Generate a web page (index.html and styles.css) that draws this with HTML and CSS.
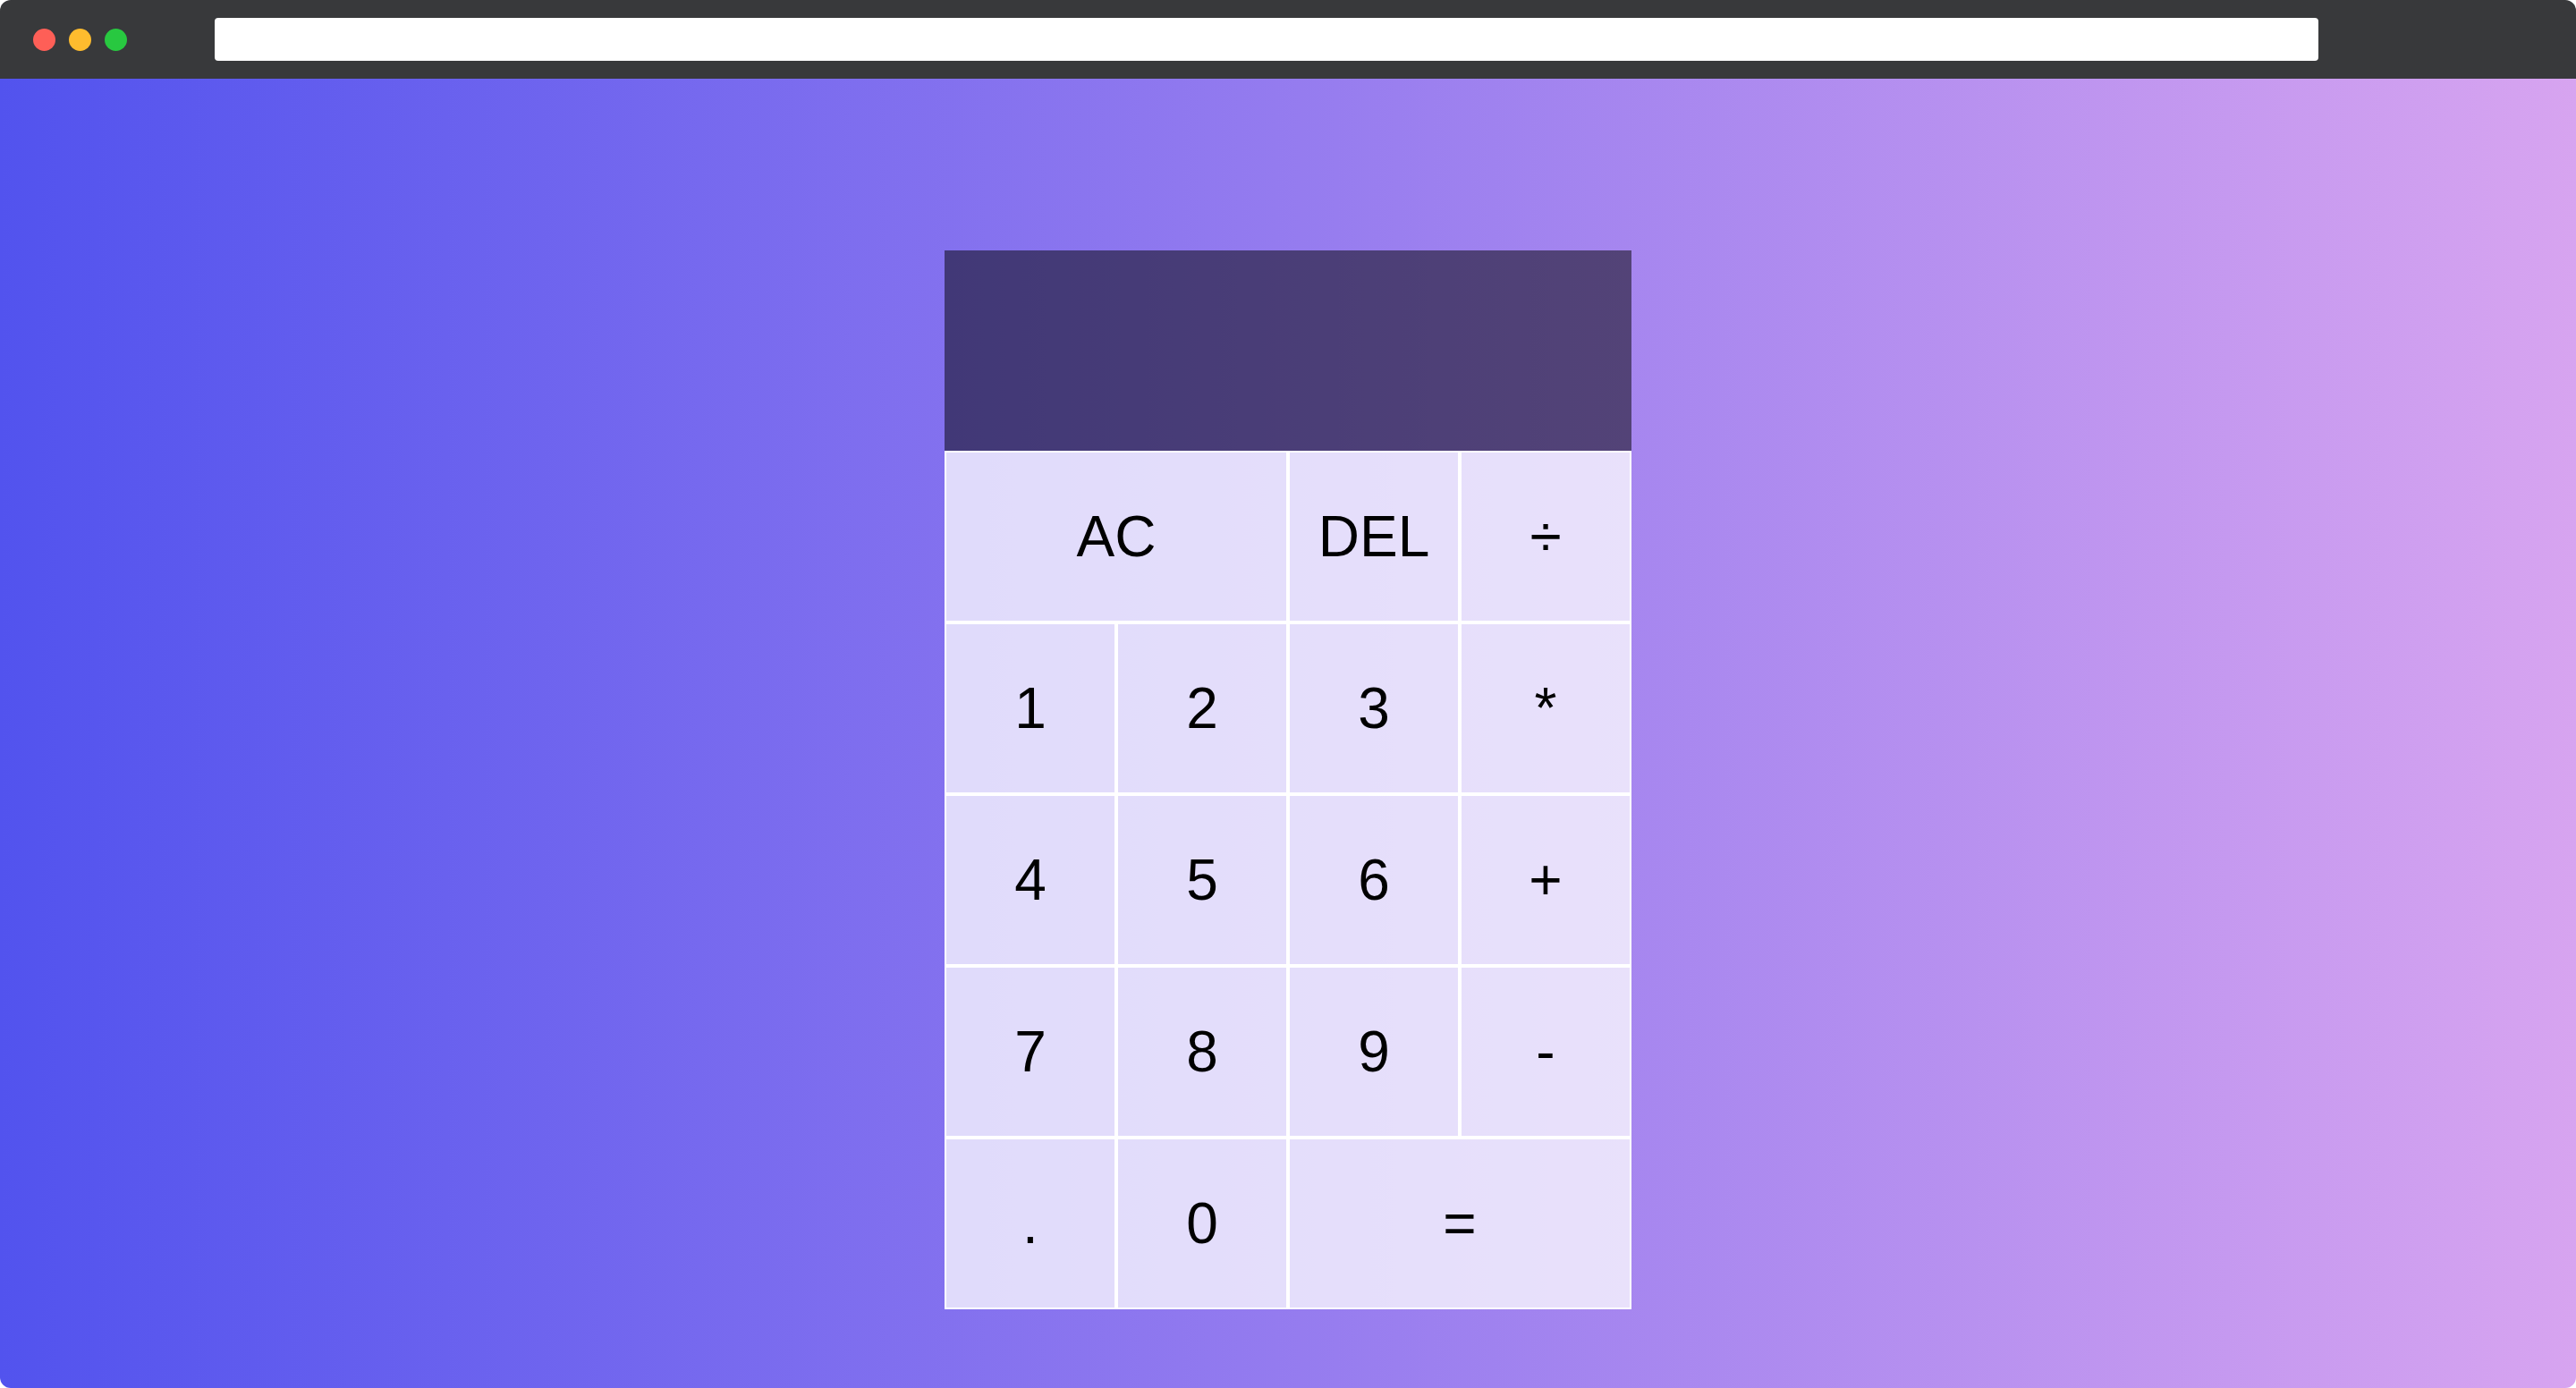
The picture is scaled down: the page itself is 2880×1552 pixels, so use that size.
FILE: index.html
```html
<!DOCTYPE html>
<html>
<head>
<meta charset="utf-8">
<title>Calculator</title>
<link rel="stylesheet" href="styles.css">
</head>
<body>
<div class="window">
  <div class="chrome">
    <div class="lights">
      <span class="light red"></span>
      <span class="light yellow"></span>
      <span class="light green"></span>
    </div>
    <div class="url"></div>
  </div>
  <div class="page">
    <div class="calculator-grid">
      <div class="output">
        <div class="previous-operand"></div>
        <div class="current-operand"></div>
      </div>
      <button class="span-two">AC</button>
      <button>DEL</button>
      <button>÷</button>
      <button>1</button>
      <button>2</button>
      <button>3</button>
      <button>*</button>
      <button>4</button>
      <button>5</button>
      <button>6</button>
      <button>+</button>
      <button>7</button>
      <button>8</button>
      <button>9</button>
      <button>-</button>
      <button>.</button>
      <button>0</button>
      <button class="span-two">=</button>
    </div>
  </div>
</div>
</body>
</html>
```

FILE: styles.css
```css
* { box-sizing: border-box; }
html, body {
  margin: 0;
  padding: 0;
  background: #ffffff;
  font-family: "Liberation Sans", Arial, sans-serif;
}
.window {
  width: 2880px;
  height: 1552px;
  display: flex;
  flex-direction: column;
  border-radius: 12px;
  overflow: hidden;
}
.chrome {
  height: 88px;
  background: #38393b;
  display: flex;
  align-items: center;
  padding-left: 37px;
  flex-shrink: 0;
}
.lights {
  display: flex;
  gap: 15px;
  width: 203px;
}
.light {
  width: 25px;
  height: 25px;
  border-radius: 50%;
  display: block;
}
.red { background: #fe5f57; }
.yellow { background: #febc2e; }
.green { background: #28c840; }
.url {
  width: 2352px;
  height: 48px;
  background: #ffffff;
  border-radius: 4px;
}
.page {
  flex: 1;
  background: linear-gradient(to right, #5253ee, #d7a4f0);
  display: flex;
  justify-content: center;
  align-items: flex-start;
  padding-top: 192px;
}
.calculator-grid {
  display: grid;
  grid-template-columns: repeat(4, 192px);
  grid-template-rows: 224px repeat(5, 192px);
}
.calculator-grid > button {
  cursor: pointer;
  font-family: "Liberation Sans", Arial, sans-serif;
  font-size: 64px;
  color: #000000;
  border: 2px solid #ffffff;
  outline: none;
  background-color: rgba(255, 255, 255, 0.75);
  padding: 0;
  margin: 0;
}
.span-two {
  grid-column: span 2;
}
.output {
  grid-column: 1 / -1;
  background-color: rgba(0, 0, 0, 0.5);
  display: flex;
  align-items: flex-end;
  justify-content: space-around;
  flex-direction: column;
  padding: 20px;
  word-wrap: break-word;
  word-break: break-all;
}
.previous-operand {
  color: rgba(255, 255, 255, 0.75);
  font-size: 48px;
}
.current-operand {
  color: #ffffff;
  font-size: 80px;
}
```
